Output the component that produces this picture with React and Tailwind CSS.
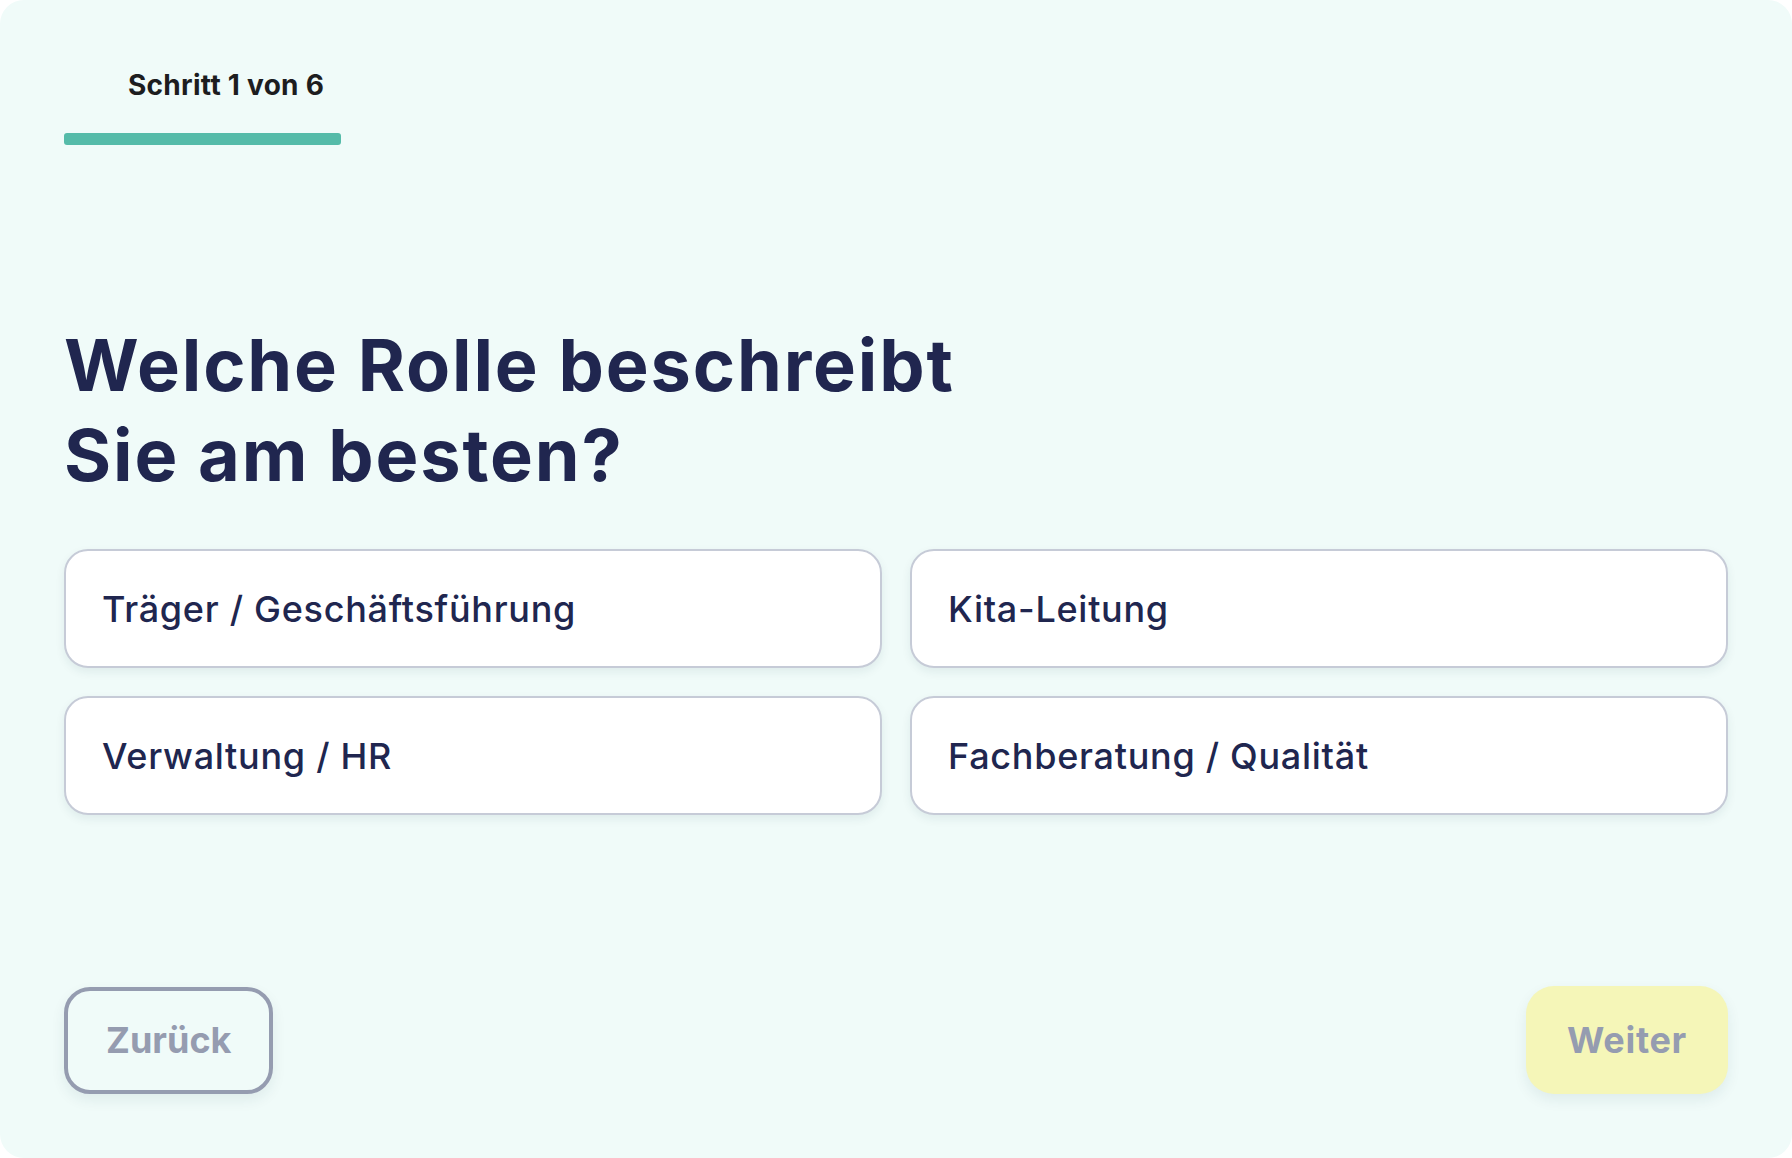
export default function App() {
  const options = [
    "Träger / Geschäftsführung",
    "Kita-Leitung",
    "Verwaltung / HR",
    "Fachberatung / Qualität",
  ];

  return (
    <div className="w-full h-screen bg-white" style={{ fontFamily: "Inter, 'Noto Sans', sans-serif" }}>
      <div className="h-full rounded-[24px] bg-[#f0fbf9] p-16 flex flex-col">
        {/* Step indicator */}
        <div className="w-[277px]">
          <p className="pl-16 text-[28px] leading-[42px] font-bold text-[#1d1d1f] tracking-[0.01em]">
            Schritt 1 von 6
          </p>
          <div className="mt-[27px] h-3 rounded-[3px] bg-[#55bba9]" />
        </div>

        {/* Question */}
        <h1 className="mt-[175px] text-[72px] leading-[90px] font-bold text-[#20264f] tracking-[0.026em]">
          Welche Rolle beschreibt
          <br />
          Sie am besten?
        </h1>

        {/* Options */}
        <div className="mt-[49px] grid grid-cols-2 gap-7">
          {options.map((label) => (
            <button
              key={label}
              className="h-[119px] rounded-[24px] border-2 border-[#c6cbd7] bg-white px-9 text-left text-[36px] font-medium text-[#20264f] tracking-[0.02em] shadow-[0_4px_10px_rgba(30,60,80,0.08)]"
            >
              {label}
            </button>
          ))}
        </div>

        {/* Navigation */}
        <div className="mt-auto flex items-center justify-between">
          <button className="h-[107px] rounded-[26px] border-4 border-[#959cb0] px-[38px] text-[36px] font-bold text-[#959cb0] shadow-[0_6px_14px_rgba(30,60,80,0.08)]">
            Zurück
          </button>
          <button className="h-[108px] rounded-[28px] bg-[#f5f6b8] px-[41px] text-[36px] font-bold text-[#959cb0] tracking-[0.02em] shadow-[0_6px_14px_rgba(30,60,80,0.08)]">
            Weiter
          </button>
        </div>
      </div>
    </div>
  );
}
